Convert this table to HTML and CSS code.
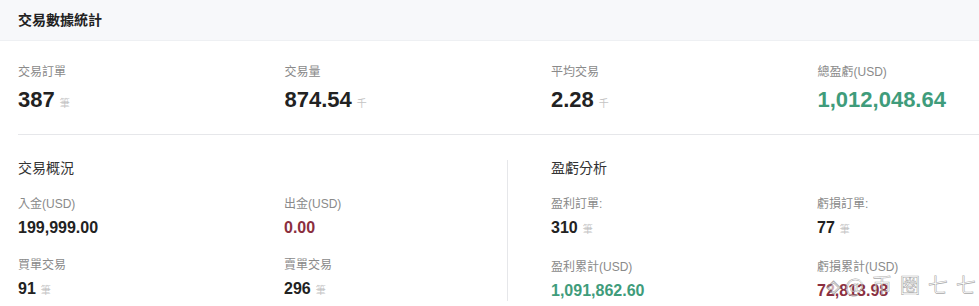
FILE: index.html
```html
<!DOCTYPE html>
<html lang="zh-Hant">
<head>
<meta charset="utf-8">
<link rel="stylesheet" href="styles.css">
</head>
<body>
<div class="page">
  <div class="header">交易數據統計</div>
  <div class="stats">
    <div class="stat">
      <div class="label">交易訂單</div>
      <div class="big">387<span class="unit">筆</span></div>
    </div>
    <div class="stat">
      <div class="label">交易量</div>
      <div class="big">874.54<span class="unit">千</span></div>
    </div>
    <div class="stat">
      <div class="label">平均交易</div>
      <div class="big">2.28<span class="unit">千</span></div>
    </div>
    <div class="stat">
      <div class="label">總盈虧(USD)</div>
      <div class="big is-green">1,012,048.64</div>
    </div>
  </div>
  <div class="bottom">
    <div class="section left">
      <div class="sec-title">交易概況</div>
      <div class="grid">
        <div class="item"><div class="label">入金(USD)</div><div class="val">199,999.00</div></div>
        <div class="item"><div class="label">出金(USD)</div><div class="val is-red">0.00</div></div>
        <div class="item"><div class="label">買單交易</div><div class="val">91<span class="unit">筆</span></div></div>
        <div class="item"><div class="label">賣單交易</div><div class="val">296<span class="unit">筆</span></div></div>
      </div>
    </div>
    <div class="section right">
      <div class="sec-title">盈虧分析</div>
      <div class="grid">
        <div class="item"><div class="label">盈利訂單:</div><div class="val">310<span class="unit">筆</span></div></div>
        <div class="item"><div class="label">虧損訂單:</div><div class="val">77<span class="unit">筆</span></div></div>
        <div class="item"><div class="label">盈利累計(USD)</div><div class="val is-green">1,091,862.60</div></div>
        <div class="item"><div class="label">虧損累計(USD)</div><div class="val is-red">72,813.98</div></div>
      </div>
    </div>
  </div>
  <div class="watermark"><span class="wm-icon">◈</span>@币圈七七</div>
</div>
</body>
</html>
```
FILE: styles.css
```css
html, body {
  margin: 0;
  padding: 0;
  background: #ffffff;
}
body {
  font-family: "Liberation Sans", Arial, "Noto Sans CJK TC", sans-serif;
  color: #333;
  width: 979px;
  height: 306px;
  overflow: hidden;
}
.page {
  position: relative;
  width: 979px;
  height: 306px;
  overflow: hidden;
}
.header {
  height: 40px;
  line-height: 40px;
  background: #f7f8fa;
  border-bottom: 1px solid #eef0f3;
  padding-left: 18px;
  font-size: 14px;
  font-weight: bold;
  color: #222;
}
.stats {
  margin-left: 18px;
  padding: 23px 0 16px 0;
  border-bottom: 1px solid #e6e7ea;
  display: grid;
  grid-template-columns: repeat(4, 266.5px);
}
.label {
  font-size: 12px;
  line-height: 16px;
  color: #8a8a8a;
}
.big {
  margin-top: 6px;
  font-size: 22px;
  line-height: 28px;
  font-weight: bold;
  color: #222;
}
.unit {
  font-size: 10px;
  font-weight: normal;
  color: #c4c4c4;
  margin-left: 5px;
}
.bottom {
  display: flex;
  padding-top: 23px;
}
.section {
  display: flex;
  flex-direction: column;
}
.left {
  width: 489px;
  padding-left: 18px;
}
.right {
  border-left: 1px solid #e6e7ea;
  padding-left: 43px;
  margin-top: 2px;
}
.right .sec-title { margin-top: -2px; }
.sec-title {
  font-size: 14px;
  line-height: 20px;
  color: #333;
}
.grid {
  display: grid;
  grid-template-columns: 266px 266px;
  row-gap: 19px;
  margin-top: 18px;
}
.val {
  margin-top: 6px;
  font-size: 16px;
  line-height: 20px;
  font-weight: bold;
  color: #222;
}
.big.is-green, .val.is-green { color: #3f9c7b; }
.val.is-red { color: #8b2f3f; }
.watermark {
  position: absolute;
  left: 826px;
  top: 273px;
  white-space: nowrap;
  font-size: 20px;
  line-height: 24px;
  color: rgba(255, 255, 255, 0.6);
  -webkit-text-stroke: 0.6px rgba(90, 90, 90, 0.55);
  letter-spacing: 8px;
  font-family: "Noto Sans CJK SC", sans-serif;
}
.wm-icon {
  font-size: 15px;
  letter-spacing: 4px;
}
```
